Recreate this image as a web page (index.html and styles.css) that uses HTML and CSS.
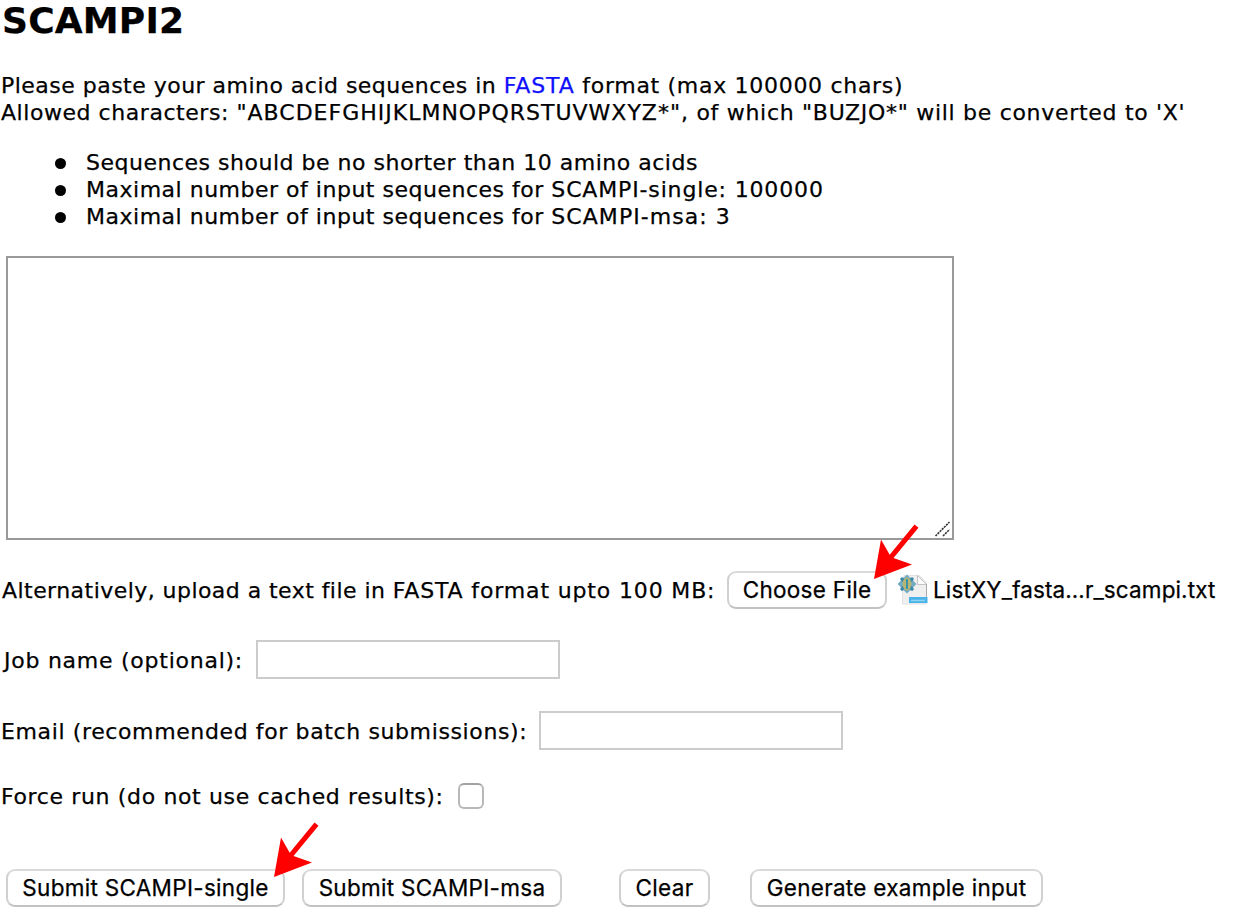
FILE: index.html
```
<!DOCTYPE html>
<html lang="en">
<head>
<meta charset="utf-8">
<title>SCAMPI2</title>
<link rel="stylesheet" href="styles.css">
</head>
<body>
<main class="page">
  <h1 class="title">SCAMPI2</h1>
  <p class="intro"><span class="intro-lead">Please paste your amino acid sequences in </span><a class="link">FASTA</a><span class="intro-rest"> format (max 100000 chars)</span><br><span class="intro-allowed">Allowed characters: </span><span class="alphabet">"ABCDEFGHIJKLMNOPQRSTUVWXYZ*"</span><span class="intro-rest">, of which "BUZJO*" will be converted to 'X'</span></p>
  <ul class="limits">
    <li class="limit">Sequences should be no shorter than 10 amino acids</li>
    <li class="limit"><span>Maximal number of input sequences for <span class="wide">SCAMPI-single: 100000</span></span></li>
    <li class="limit"><span>Maximal number of input sequences for <span class="wider">SCAMPI-msa: 3</span></span></li>
  </ul>
  <form class="form">
    <div class="sequence-box">
      <svg class="grip" width="18" height="18" viewBox="0 0 18 18"><path d="M1.500 16L15.500 2M9 16L15.500 9.500" stroke="#333" stroke-width="1.600" stroke-dasharray="2.200 0.800" fill="none"/></svg>
    </div>
    <div class="row row-file">
      <span class="label label-file">Alternatively, upload a text file in <span class="wide">FASTA format upto 100 MB:</span></span>
      <button class="button button-choose" type="button">Choose File
        <svg class="arrow arrow-choose" width="48" height="58" viewBox="0 0 48 58"><path d="M2 56L9 16.500L17.700 31.700L42.500 1.500L46.500 4.700L21.500 35L40 41.500Z" fill="#f00"/></svg>
      </button>
      <svg class="file-icon" width="34" height="34" viewBox="0 0 34 34">
        <path d="M7 2.500H22.500L29.500 10V31H5.500V14Z" fill="#efefef" stroke="#e2e2e2"/>
        <path d="M20.500 2.500V11.500H29.500Z" fill="#fafafa" stroke="#c4c4c4"/>
        <path d="M29.500 11V25" stroke="#aaa"/>
        <rect x="12" y="24" width="18.500" height="6" fill="#49b2e8"/>
        <path d="M14 27.500H28" stroke="#8ed5f5" stroke-width="1.500"/>
        <path d="M10 1.500L19.500 11L10 20.500L0.500 11Z" fill="#72abc2"/>
        <path d="M5 6L15 16M15 6L5 16" stroke="#3d87a8" stroke-width="3.500" stroke-linecap="round"/>
        <ellipse cx="10" cy="11" rx="4.500" ry="6.500" fill="#b3b676"/>
        <path d="M10 6V16" stroke="#3d92a6" stroke-width="2"/>
      </svg>
      <span class="file-name">ListXY_fasta…r_scampi.txt</span>
    </div>
    <div class="row row-job">
      <label class="label label-job" for="job">Job name (optional):</label>
      <input class="field" id="job" type="text">
    </div>
    <div class="row row-email">
      <label class="label label-email" for="email">Email (recommended for batch submissions):</label>
      <input class="field" id="email" type="text">
    </div>
    <div class="row row-force">
      <label class="label label-force" for="force">Force run (do not use cached results):</label>
      <input class="check" id="force" type="checkbox">
    </div>
    <div class="actions">
      <button class="button button-single" type="button">Submit SCAMPI-single
        <svg class="arrow arrow-single" width="48" height="58" viewBox="0 0 48 58"><path d="M2 56L9 16.500L17.700 31.700L42.500 1.500L46.500 4.700L21.500 35L40 41.500Z" fill="#f00"/></svg>
      </button>
      <button class="button button-msa" type="button">Submit SCAMPI-msa</button>
      <button class="button button-clear" type="button">Clear</button>
      <button class="button button-example" type="button">Generate example input</button>
    </div>
  </form>
</main>
</body>
</html>
```
FILE: styles.css
```
* { box-sizing: border-box; }
body {
  margin: 0;
  background: #fff;
  color: #000;
  font: 22px/27px "DejaVu Sans", Verdana, sans-serif;
  -webkit-text-stroke: 0.25px;
}
.page { width: 1240px; height: 921px; overflow: hidden; display: flow-root; }
.title { margin: 0 0 31px 2px; font-size: 36px; line-height: 41px; letter-spacing: 0.2px; }
.intro { margin: 0 0 23px 1px; white-space: nowrap; }
.intro-lead { letter-spacing: 0.48px; }
.intro-rest { letter-spacing: 0.7px; }
.intro-allowed { letter-spacing: 0.55px; }
.link { color: #1010ff; letter-spacing: 0.9px; }
.alphabet { letter-spacing: 1px; }
.limits { margin: 0 0 26px; padding: 0; list-style: none; }
.limit { display: flex; align-items: center; padding-left: 55px; white-space: nowrap; letter-spacing: 0.51px; }
.limit::before { content: ""; width: 11px; height: 11px; margin: 2px 20px 0 0; border-radius: 50%; background: #000; }
.wide { letter-spacing: 0.85px; }
.wider { letter-spacing: 1.05px; }
.form { display: flex; flex-direction: column; }
.sequence-box {
  display: flex;
  align-items: flex-end;
  justify-content: flex-end;
  width: 948px;
  height: 284px;
  margin-left: 6px;
  border: 2px solid #999;
}
.row { display: flex; align-items: center; white-space: nowrap; }
.row-file { height: 38px; margin-top: 31px; }
.row-job { height: 40px; margin-top: 31px; }
.row-email { height: 40px; margin-top: 31px; }
.row-force { height: 26px; margin-top: 32px; }
.label { flex: none; padding-left: 1px; }
.label-file { width: 727px; padding-left: 2px; letter-spacing: 0.45px; }
.label-job { width: 256px; padding-left: 4px; letter-spacing: 0.75px; }
.label-email { width: 539px; letter-spacing: 0.62px; }
.label-force { width: 458px; letter-spacing: 0.64px; }
.button {
  position: relative;
  flex: none;
  height: 38px;
  padding: 0;
  border: 2px solid #d0d0d0;
  border-top-color: #dadada;
  border-bottom-color: #c2c2c2;
  border-radius: 9px;
  background: #fff;
  color: #000;
  font: 22.5px/32px Inter, sans-serif;
  letter-spacing: 0.3px;
  white-space: nowrap;
}
.button-choose { width: 160px; }
.button-single { width: 279px; }
.button-msa { width: 260px; margin-left: 17px; }
.button-clear { width: 91px; margin-left: 57px; }
.button-example { width: 293px; margin-left: 40px; }
.arrow { position: absolute; top: -50px; }
.arrow-choose { right: -35px; }
.arrow-single { right: -37px; }
.file-icon { margin-left: 10px; }
.file-name { margin-left: 2px; font: 22.5px/32px Inter, sans-serif; letter-spacing: 0.12px; }
.field { width: 304px; height: 39px; margin: 0 0 1px; border: 2px solid #ccc; background: #fff; font: inherit; }
.check { appearance: none; width: 26px; height: 26px; margin: 0; border: 2px solid #b8b8b8; border-top-color: #a2a2a2; border-radius: 6px; background: #fff; }
.actions { display: flex; margin: 60px 0 0 6px; }
```
